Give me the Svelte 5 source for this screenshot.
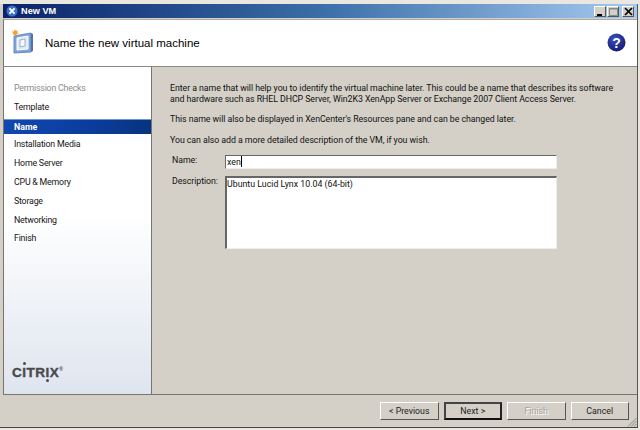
<script>
  const STEPS = [
    { label: 'Permission Checks', state: 'done' },
    { label: 'Template' },
    { label: 'Name', state: 'active' },
    { label: 'Installation Media' },
    { label: 'Home Server' },
    { label: 'CPU & Memory' },
    { label: 'Storage' },
    { label: 'Networking' },
    { label: 'Finish' },
  ];

  let name = $state('xen');
  let description = $state('Ubuntu Lucid Lynx 10.04 (64-bit)');
</script>

<div class="desktop">
  <div class="window">
    <div class="titlebar">
      <svg class="app-icon" width="12" height="12" viewBox="0 0 14 14">
        <circle cx="7" cy="7" r="6.500" fill="#3f6fc8" />
        <path d="M4 4l6 6M10 4l-6 6" stroke="#fff" stroke-width="2.200" />
      </svg>
      <span class="title">New VM</span>
      <div class="controls">
        <button type="button" class="ctl" aria-label="Minimize">
          <svg width="9" height="9" viewBox="0 0 9 9"><path d="M1 7h5v2H1z" fill="#000" /></svg>
        </button>
        <button type="button" class="ctl" aria-label="Maximize">
          <svg width="9" height="9" viewBox="0 0 9 9"><path d="M.5 1.500h8v7h-8z" fill="none" stroke="#8a8a86" /><path d="M0 1h9v1.500H0z" fill="#8a8a86" /></svg>
        </button>
        <button type="button" class="ctl close" aria-label="Close">
          <svg width="9" height="9" viewBox="0 0 9 9"><path d="M1 1l7 7M8 1L1 8" stroke="#000" stroke-width="1.700" /></svg>
        </button>
      </div>
    </div>

    <header class="head">
      <svg class="vm-icon" width="24" height="25" viewBox="0 0 24 25">
        <path d="M3 7l17-3v19L3 24z" fill="#7fa3d6" stroke="#6a8abd" />
        <path d="M20 4l2 1v17l-2 1z" fill="#4f74ad" />
        <path d="M6 9l11-2v13L6 21z" fill="#dfe9f6" stroke="#fff" />
        <path d="M9 11l5-1v7l-5 1z" fill="#f5f7fb" stroke="#8aa3c7" stroke-width=".8" />
        <path d="M4 0l.8 2 2.200-1-1 2.200 2 1-2.300.8L5 7 3.700 5.400 1.500 6l.8-2L.5 2.500l2.300 0z" fill="#f0a030" />
      </svg>
      <h1>Name the new virtual machine</h1>
      <svg class="help" width="19" height="19" viewBox="0 0 19 19">
        <defs>
          <radialGradient id="helpball" cx="0.4" cy="0.3" r="0.8">
            <stop offset="0" stop-color="#3b4fc0" />
            <stop offset="1" stop-color="#10186e" />
          </radialGradient>
        </defs>
        <circle cx="9.500" cy="9.500" r="9" fill="url(#helpball)" />
        <text x="9.500" y="14.500" text-anchor="middle" class="help-mark">?</text>
      </svg>
    </header>

    <div class="middle">
      <aside class="side">
        <ul class="steps">
          {#each STEPS as step}
            <li class:active={step.state === 'active'} class:done={step.state === 'done'}>{step.label}</li>
          {/each}
        </ul>
        <div class="brand">C<span class="dot">I</span>TR<span class="dot low">I</span>X<sup>®</sup></div>
      </aside>

      <main class="content">
        <p>Enter a name that will help you to identify the virtual machine later. This could be a name that describes its software and hardware such as RHEL DHCP Server, Win2K3 XenApp Server or Exchange 2007 Client Access Server.</p>
        <p>This name will also be displayed in XenCenter's Resources pane and can be changed later.</p>
        <p>You can also add a more detailed description of the VM, if you wish.</p>
        <div class="form">
          <label for="vm-name">Name:</label>
          <div class="field">
            <input id="vm-name" type="text" bind:value={name} />
            <span class="caret"></span>
          </div>
          <label for="vm-desc">Description:</label>
          <textarea id="vm-desc" bind:value={description}></textarea>
        </div>
      </main>
    </div>

    <footer class="foot">
      <button type="button" class="btn">&lt; Previous</button>
      <button type="button" class="btn default">Next &gt;</button>
      <button type="button" class="btn" disabled>Finish</button>
      <button type="button" class="btn">Cancel</button>
      <svg class="grip" width="10" height="10" viewBox="0 0 10 10">
        <path d="M9.500 1L1 9.500M9.500 4L4 9.500M9.500 7L7 9.500" stroke="#8a8880" />
      </svg>
    </footer>
  </div>
</div>

<style>
  :global(body) {
    margin: 0;
    background: #e9e7e0;
  }

  .desktop {
    width: 640px;
    height: 430px;
    padding-top: 4px;
    box-sizing: border-box;
    background: #e9e7e0;
    overflow: hidden;
    font-family: Roboto, "Liberation Sans", Arial, sans-serif;
    font-size: 8.800px;
    letter-spacing: -0.06px;
    color: #111;
  }

  .window {
    width: 638px;
    height: 424px;
    display: flex;
    flex-direction: column;
    box-sizing: border-box;
    padding-left: 3px;
    background: #d4d0c8;
    border-right: 1px solid #555;
    border-bottom: 1px solid #444;
  }

  .titlebar {
    height: 14px;
    padding-right: 3px;
    display: flex;
    align-items: center;
    gap: 3px;
    flex: none;
    background: linear-gradient(90deg, #0a246a 0%, #3a6ea8 50%, #a6caf0 100%);
  }

  .app-icon {
    margin-left: 3px;
  }

  .title {
    color: #fff;
    font-family: "Liberation Sans", Arial, sans-serif;
    font-weight: bold;
    font-size: 9.200px;
    letter-spacing: 0;
  }

  .controls {
    margin-left: auto;
    display: flex;
    gap: 1px;
  }

  .ctl {
    width: 12px;
    height: 11px;
    padding: 0;
    margin: 0;
    display: flex;
    align-items: center;
    justify-content: center;
    background: #d4d0c8;
    border: 1px solid;
    border-color: #fff #555 #555 #fff;
  }

  .close {
    margin-left: 2px;
  }

  .head {
    height: 48px;
    flex: none;
    display: flex;
    align-items: center;
    background: #fff;
    border-left: 1px solid #77756f;
    border-top: 1px solid #aaa;
    border-bottom: 1px solid #8a8a84;
    box-sizing: border-box;
    padding: 0 11px 0 7px;
    margin-top: 1px;
  }

  .vm-icon {
    flex: none;
    margin-top: -4px;
  }

  h1 {
    margin: 0 0 0 10px;
    font-family: "Liberation Sans", Arial, sans-serif;
    font-size: 11.500px;
    font-weight: normal;
    letter-spacing: 0;
    color: #000;
  }

  .help {
    margin-left: auto;
    margin-top: -2px;
    flex: none;
  }

  .help-mark {
    font-family: "Liberation Sans", Arial, sans-serif;
    font-size: 14px;
    font-weight: bold;
    fill: #fff;
  }

  .middle {
    flex: 1;
    display: flex;
    min-height: 0;
  }

  .side {
    width: 149px;
    flex: none;
    display: flex;
    flex-direction: column;
    box-sizing: border-box;
    background: linear-gradient(180deg, #ffffff 45%, #dfe5ef 100%);
    border-left: 1px solid #77756f;
    border-right: 1px solid #77756f;
  }

  .steps {
    list-style: none;
    margin: 0;
    padding: 12px 0 0;
  }

  .steps li {
    height: 18.800px;
    line-height: 18.800px;
    padding-left: 10px;
    letter-spacing: -0.2px;
    color: #151515;
  }

  .steps li.done {
    color: #8b8b8b;
  }

  .steps li.active {
    height: 15px;
    line-height: 14px;
    margin: 2px 0 1.800px;
    color: #fff;
    font-weight: bold;
    letter-spacing: 0;
    background: linear-gradient(90deg, #1048b0 0%, #0b3c9c 60%, #07347f 100%);
    border-top: 1px solid #6d94d6;
    box-sizing: border-box;
  }

  .brand {
    margin-top: auto;
    padding: 0 0 14px 8px;
    font-family: "Liberation Sans", Arial, sans-serif;
    font-size: 13.500px;
    font-weight: bold;
    letter-spacing: 0.5px;
    color: #4a4a4c;
    line-height: 14px;
    -webkit-text-stroke: 0.4px #4a4a4c;
  }

  .dot {
    position: relative;
  }

  .dot::after {
    content: '';
    position: absolute;
    left: 0.5px;
    top: -3px;
    width: 3px;
    height: 3px;
    border-radius: 50%;
    background: #4a4a4c;
  }

  .dot.low::after {
    top: 14px;
  }

  .brand sup {
    font-size: 5px;
    vertical-align: 6px;
    line-height: 0;
    -webkit-text-stroke: 0;
  }

  .content {
    flex: 1;
    min-width: 0;
    padding: 16px 16px 0 18px;
  }

  p {
    margin: 0 0 9px;
    line-height: 11px;
    width: 452px;
  }

  p:nth-of-type(2) {
    margin-bottom: 10px;
  }

  .form {
    display: grid;
    grid-template-columns: 53px 332px;
    row-gap: 7px;
    margin-top: 8px;
    padding-left: 2px;
    align-items: start;
  }

  label {
    padding-top: 0;
  }

  .field {
    position: relative;
  }

  .caret {
    position: absolute;
    left: 16px;
    top: 1px;
    width: 1px;
    height: 11px;
    background: #000;
  }

  input,
  textarea {
    box-sizing: border-box;
    width: 332px;
    margin: 0;
    display: block;
    font-family: Roboto, "Liberation Sans", Arial, sans-serif;
    font-size: 8.800px;
    color: #111;
    background: #fff;
    border: 1px solid;
    border-color: #666 #eee #eee #666;
    outline: none;
    border-radius: 0;
    resize: none;
  }

  input {
    height: 14px;
    padding: 0 1px;
  }

  textarea {
    height: 73px;
    padding: 1px 0;
    line-height: 11px;
    border-width: 2px 1px 1px 2px;
  }

  .foot {
    height: 33px;
    flex: none;
    position: relative;
    display: flex;
    justify-content: flex-end;
    align-items: flex-start;
    gap: 5px;
    padding: 7px 8px 0 0;
    box-sizing: border-box;
    border-top: 1px solid #77756f;
  }

  .grip {
    position: absolute;
    right: 0;
    bottom: 0;
  }

  .btn {
    width: 58.500px;
    height: 18px;
    padding: 0;
    margin: 0;
    font-family: Roboto, "Liberation Sans", Arial, sans-serif;
    font-size: 8.800px;
    color: #222;
    background: #d4d0c8;
    border: 1px solid;
    border-color: #fff #555 #555 #fff;
  }

  .btn.default {
    border: 2px solid;
    border-color: #444 #222 #111 #444;
  }

  .btn:disabled {
    color: #a5a29b;
    text-shadow: 1px 1px 0 #fff;
  }
</style>
